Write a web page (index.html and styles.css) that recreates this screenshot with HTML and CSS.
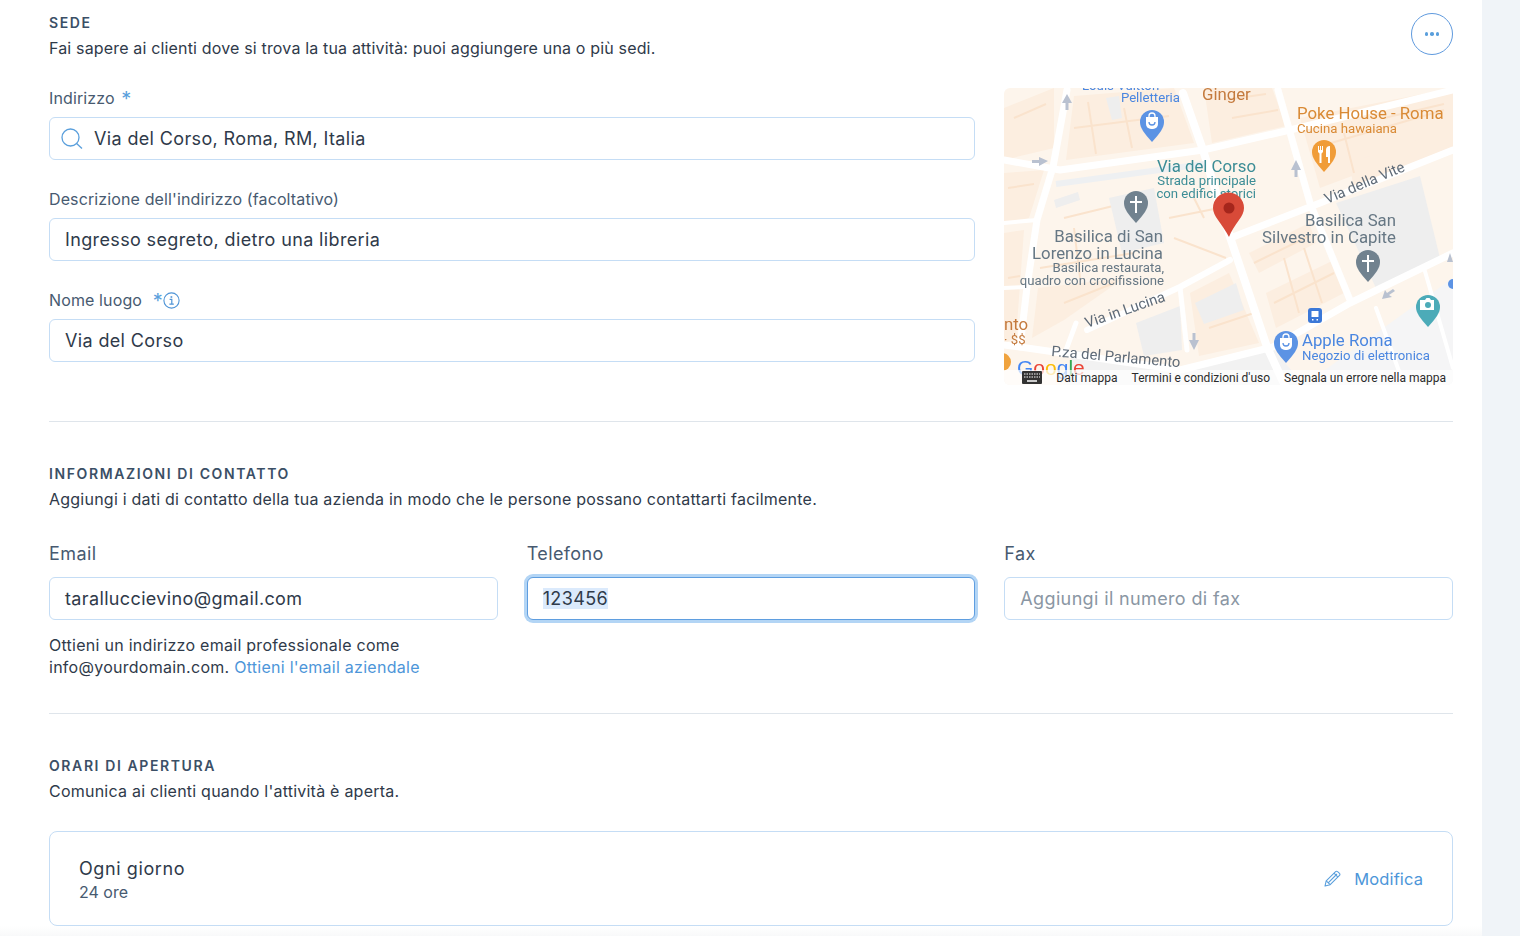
FILE: index.html
```html
<!DOCTYPE html>
<html lang="it">
<head>
    <meta charset="UTF-8">
    <title>Informazioni attività</title>
    <link rel="stylesheet" href="styles.css">
</head>
<body>
    <main class="panel">
        <section class="section section-location">
            <div class="section-head">
                <div>
                    <h2>SEDE</h2>
                    <p>Fai sapere ai clienti dove si trova la tua attività: puoi aggiungere una o più sedi.</p>
                </div>
                <button class="more-btn" aria-label="Altro"><span></span><span></span><span></span></button>
            </div>

            <div class="location-row">
                <div class="location-fields">
                    <div class="field">
                        <label>Indirizzo <span class="req">*</span></label>
                        <div class="input input-search">
                            <svg width="24" height="24" viewBox="0 0 24 24" fill="none" stroke="#5a9fdc" stroke-width="1.3"><circle cx="10.5" cy="10.5" r="8.5"/><path d="M16.6 16.6l5.4 5"/></svg>
                            <span>Via del Corso, Roma, RM, Italia</span>
                        </div>
                    </div>
                    <div class="field">
                        <label>Descrizione dell'indirizzo (facoltativo)</label>
                        <div class="input">Ingresso segreto, dietro una libreria</div>
                    </div>
                    <div class="field">
                        <label>Nome luogo <span class="req req-tight">*</span>
                            <svg class="info" width="17" height="17" viewBox="0 0 17 17" fill="none" stroke="#4f94d6"><circle cx="8.5" cy="8.5" r="7.6" stroke-width="1.1"/><path d="M6.6 7.4h2.2v4.6M6.4 12.2h4.4" stroke-width="1.2"/><path d="M8.4 4.2v1.6" stroke-width="1.7"/></svg>
                        </label>
                        <div class="input">Via del Corso</div>
                    </div>
                </div>

                <div class="map">
                    <svg class="map-art" width="449" height="297" viewBox="0 0 449 297">
                        <rect width="449" height="297" fill="#fdf5ec"/>
                        <!-- isolati -->
                        <g fill="#fceee0">
                            <path d="M0 20L50 0V60L0 72Z"/>
                            <path d="M70 8L170 0L190 55L62 72Z"/>
                            <path d="M200 0H268L282 38L208 55Z"/>
                            <path d="M296 30L449 0V50L316 100Z"/>
                            <path d="M0 85L40 82L25 130L0 135Z"/>
                            <path d="M0 145L20 142L12 250L0 255Z"/>
                            <path d="M34 200L120 190L60 232L28 250Z"/>
                            <path d="M345 75L449 40V60L350 100Z"/>
                            <path d="M245 165L305 135L312 155L255 185Z"/>
                            <path d="M262 205L330 172L340 205L272 240Z"/>
                            <path d="M186 205L225 185L255 255L195 268Z"/>
                        </g>
                        <!-- tratti degli edifici -->
                        <g fill="none" stroke="#fae3cd" stroke-width="2">
                            <path d="M10 30L42 16M70 40L165 28M84 14L92 66M120 20L128 60"/>
                            <path d="M220 12L262 6M228 30L274 22M310 60L440 22M340 45L350 85"/>
                            <path d="M60 130L150 108M36 180L130 165M70 140L76 190M4 100L30 96M4 190L16 188"/>
                            <path d="M165 130L215 120M170 150L222 170M190 110L200 130"/>
                            <path d="M250 175L305 148M270 215L330 185M280 170L295 225M300 160L318 215"/>
                            <path d="M205 240L250 225M380 30L440 16M60 215L110 195"/>
                        </g>
                        <!-- edifici grigi -->
                        <g fill="#eeeeee">
                            <path d="M332 115L416 88L436 170L372 200Z"/>
                            <path d="M191 215L232 195L240 222L200 236Z"/>
                            <path d="M132 235L176 218L178 262L140 268Z"/>
                            <path d="M105 110L150 100L160 155L118 165Z"/>
                            <path d="M102 10L115 8L118 30L108 32Z"/>
                            <path d="M50 112L74 104L76 112L52 120Z"/>
                        </g>
                        <path d="M300 297L449 190V297Z" fill="#f5f5f6"/>
                        <path d="M60 297L70 262L175 282L270 262L300 297Z" fill="#f2f2f2"/>
                        <!-- strade -->
                        <g fill="none" stroke="#fff" stroke-linecap="round" stroke-linejoin="round">
                            <path d="M179 5L199 62L226 149L263 259L282 300" stroke-width="8"/>
                            <path d="M0 72L56 82L199 62L286 42L449 2" stroke-width="7"/>
                            <path d="M63 2L49 79L33 132L23 199L16 259" stroke-width="7"/>
                            <path d="M229 149L316 115L449 62" stroke-width="7"/>
                            <path d="M274 2L306 115L346 212" stroke-width="7"/>
                            <path d="M83 242L176 199L226 172" stroke-width="6"/>
                            <path d="M0 257L16 259L176 282L269 259L346 215L449 165" stroke-width="7"/>
                            <path d="M176 199L183 262" stroke-width="5"/>
                            <path d="M72 235L62 262" stroke-width="5"/>
                            <path d="M0 135L33 132M0 200L23 199" stroke-width="4"/>
                            <path d="M372 220L400 297M420 180L449 280" stroke-width="4"/>
                        </g>
                        <path d="M52 96L200 76" stroke="#eef0f2" stroke-width="6" fill="none"/>
                        <!-- frecce -->
                        <g fill="#b9c1d0">
                            <path d="M63 6l-5 9h3.500v7h3v-7h3.500z"/>
                            <path d="M44 73l-9-4v3h-7v3h7v3z"/>
                            <path d="M292 72l-5 10h3.500v7h3v-7h3.500z"/>
                            <path d="M190 262l-5-10h3.500v-7h3v7h3.500z"/>
                            <path d="M378 211l3 -9 2 3 6-4 2 2-6 4 3 2z"/>
                            <path d="M446 165l-3 9h6z"/>
                        </g>
                        <!-- etichette -->
                        <g class="map-text">
                            <text x="78" y="2" class="t13 blue">Louis Vuitton</text>
                            <text x="176" y="14" text-anchor="end" class="t13 blue">Pelletteria</text>
                            <text x="198" y="12" class="t17 brown">Ginger</text>
                            <text x="293" y="31" class="t17 orange">Poke House - Roma</text>
                            <text x="293" y="45" class="t13 orange">Cucina hawaiana</text>
                            <text x="252" y="84" text-anchor="end" class="t17 teal">Via del Corso</text>
                            <text x="252" y="97" text-anchor="end" class="t13 teal">Strada principale</text>
                            <text x="252" y="110" text-anchor="end" class="t13 teal">con edifici storici</text>
                            <text x="159" y="154" text-anchor="end" class="t17 grey">Basilica di San</text>
                            <text x="159" y="171" text-anchor="end" class="t17 grey">Lorenzo in Lucina</text>
                            <text x="160" y="184" text-anchor="end" class="t13 grey">Basilica restaurata,</text>
                            <text x="160" y="197" text-anchor="end" class="t13 grey">quadro con crocifissione</text>
                            <text x="392" y="138" text-anchor="end" class="t17 grey">Basilica San</text>
                            <text x="392" y="155" text-anchor="end" class="t17 grey">Silvestro in Capite</text>
                            <text x="298" y="258" class="t17 blue">Apple Roma</text>
                            <text x="298" y="272" class="t13 blue">Negozio di elettronica</text>
                            <text x="0" y="242" class="t17 brown">nto</text>
                            <text x="0" y="256" class="t13 brown">· $$</text>
                            <text transform="translate(323 116) rotate(-23)" class="t14 road">Via della Vite</text>
                            <text transform="translate(83 240) rotate(-19)" class="t14 road">Via in Lucina</text>
                            <text transform="translate(47 268) rotate(5)" class="t14 road">P.za del Parlamento</text>
                        </g>
                        <!-- segnaposto -->
                        <g transform="translate(0 -8)">
                            <path d="M148 62c-8 -9 -12 -14 -12 -20a12 12 0 0 1 24 0c0 6 -4 11 -12 20z" fill="#5c93e4"/>
                            <path d="M142 37h12v7a5 5 0 0 1-5 5h-2a5 5 0 0 1-5-5z" fill="#fff"/>
                            <path d="M145 37v-1a3 3 0 0 1 6 0v1" fill="none" stroke="#fff" stroke-width="1.300"/>
                            <path d="M145 42a3 3 0 0 0 6 0" fill="none" stroke="#5c93e4" stroke-width="1.300"/>
                        </g>
                        <path d="M320 84c-8 -9 -12 -14 -12 -20a12 12 0 0 1 24 0c0 6 -4 11 -12 20z" fill="#f09c38"/>
                        <path d="M314 58h1v4h1v-4h1v4h1v-4h1v6l-1.500 1.500V75h-2V65.500L314 64zM326 58v17h-2v-6h-2v-7a4 4 0 0 1 4-4z" fill="#fff"/>
                        <path d="M132 135c-8 -9 -12 -14 -12 -20a12 12 0 0 1 24 0c0 6 -4 11 -12 20z" fill="#71828f"/>
                        <path d="M131 108h2v5h5v2h-5v10h-2v-10h-5v-2h5z" fill="#fff"/>
                        <path d="M364 194c-8 -9 -12 -14 -12 -20a12 12 0 0 1 24 0c0 6 -4 11 -12 20z" fill="#71828f"/>
                        <path d="M363 167h2v5h5v2h-5v10h-2v-10h-5v-2h5z" fill="#fff"/>
                        <path d="M424 239c-8 -9 -12 -14 -12 -20a12 12 0 0 1 24 0c0 6 -4 11 -12 20z" fill="#4cabb8"/>
                        <path d="M416 212h5l1.500-2h3l1.500 2h3v10h-14z" fill="#fff"/>
                        <circle cx="424" cy="217" r="3" fill="#4cabb8"/>
                        <path d="M282 275c-8 -9 -12 -14 -12 -20a12 12 0 0 1 24 0c0 6 -4 11 -12 20z" fill="#5c93e4"/>
                        <path d="M276 250h12v7a5 5 0 0 1-5 5h-2a5 5 0 0 1-5-5z" fill="#fff"/>
                        <path d="M279 250v-1a3 3 0 0 1 6 0v1" fill="none" stroke="#fff" stroke-width="1.300"/>
                        <path d="M279 255a3 3 0 0 0 6 0" fill="none" stroke="#5c93e4" stroke-width="1.300"/>
                        <circle cx="449" cy="196" r="5" fill="#5c93e4"/>
                        <circle cx="-2" cy="274" r="9" fill="#f0a33e"/>
                        <rect x="304" y="220" width="14" height="15" rx="3" fill="#3b78d8"/>
                        <path d="M307.500 223h7v6h-7zM308 231h1.500v1.500H308zM312.500 231H314v1.500h-1.500z" fill="#fff"/>
                        <!-- pin rosso -->
                        <path d="M225 149c-3 -6 -7 -11 -11 -17c-3 -4 -5 -8 -5 -12a15.500 15.500 0 0 1 31 0c0 4 -2 8 -5 12c-4 6 -8 11 -10 17z" fill="#d84a38"/>
                        <circle cx="225" cy="120" r="5.500" fill="#a5261c"/>
                        <!-- logo google -->
                        <text x="13" y="287" class="g-logo"><tspan fill="#4285f4">G</tspan><tspan fill="#ea4335">o</tspan><tspan fill="#fbbc05">o</tspan><tspan fill="#4285f4">g</tspan><tspan fill="#34a853">l</tspan><tspan fill="#ea4335">e</tspan></text>
                    </svg>
                    <div class="map-footer">
                        <svg class="kbd" width="20" height="13" viewBox="0 0 20 13"><rect width="20" height="13" rx="1" fill="#333"/><path d="M2 3h16M2 6h16" stroke="#fff" stroke-dasharray="1.500 1" fill="none"/><path d="M5 10h10" stroke="#fff" stroke-width="1.500"/></svg>
                        <span>Dati mappa</span>
                        <span>Termini e condizioni d'uso</span>
                        <span>Segnala un errore nella mappa</span>
                    </div>
                </div>
            </div>
        </section>

        <section class="section section-contact">
            <h2>INFORMAZIONI DI CONTATTO</h2>
            <p>Aggiungi i dati di contatto della tua azienda in modo che le persone possano contattarti facilmente.</p>
            <div class="contact-grid">
                <div class="field-lg">
                    <label>Email</label>
                    <div class="input">taralluccievino@gmail.com</div>
                    <p class="hint">Ottieni un indirizzo email professionale come info@yourdomain.com. <a href="#">Ottieni l'email aziendale</a></p>
                </div>
                <div class="field-lg">
                    <label>Telefono</label>
                    <div class="input input-focus"><mark>123456</mark></div>
                </div>
                <div class="field-lg">
                    <label>Fax</label>
                    <div class="input input-empty">Aggiungi il numero di fax</div>
                </div>
            </div>
        </section>

        <section class="section section-hours">
            <h2>ORARI DI APERTURA</h2>
            <p>Comunica ai clienti quando l'attività è aperta.</p>
            <div class="hours-card">
                <div class="hours-text">
                    <div class="hours-title">Ogni giorno</div>
                    <div class="hours-sub">24 ore</div>
                </div>
                <a class="edit-link" href="#">
                    <svg width="17" height="17" viewBox="0 0 17 17" fill="none" stroke="#5a9fdc" stroke-width="1.100" stroke-linejoin="round"><path d="M1 16l1.200-5.200L11.600 1.600a1.400 1.400 0 0 1 2 0l1.900 1.800a1.400 1.400 0 0 1 0 2L6.200 14.700z"/><path d="M2.200 10.800l4 3.900M4.200 12.800L13 4M10 3.200l3.900 3.900"/></svg>
                    Modifica
                </a>
            </div>
        </section>
    </main>
    <aside class="side"></aside>
</body>
</html>
```

FILE: styles.css
```css
html, body {
    margin: 0;
    height: 936px;
    overflow: hidden;
}

body {
    display: flex;
    font-family: Inter, "Open Sans", sans-serif;
    color: #2f3a4a;
    background-color: #fff;
}

.panel {
    width: 1482px;
    padding: 0 29px 0 49px;
    box-sizing: border-box;
    background: linear-gradient(to bottom, #fff 926px, #f8f9fa 936px);
}

.side {
    flex: 1;
    background-color: #f0f4f8;
}

h2 {
    margin: 0;
    font-size: 14px;
    line-height: 18px;
    font-weight: 600;
    letter-spacing: 1.6px;
    color: #3b4f66;
}

.section p {
    margin: 5px 0 0;
    font-size: 16px;
    line-height: 22px;
    letter-spacing: 0.23px;
}

.section {
    border-bottom: 1px solid #dfe5eb;
}

.section-location {
    padding: 14px 0 36px;
}

.section-location p {
    letter-spacing: 0.165px;
}

.section-contact {
    padding: 43px 0 35px;
}

.section-hours {
    padding: 43px 0 0;
    border-bottom: none;
}

.section-head {
    display: flex;
    justify-content: space-between;
    align-items: flex-start;
}

.more-btn {
    display: flex;
    justify-content: center;
    align-items: center;
    gap: 2px;
    width: 42px;
    height: 42px;
    margin-top: -1px;
    padding: 0;
    border: 1px solid #5f9ade;
    border-radius: 50%;
    background: #fff;
}

.more-btn span {
    width: 3.500px;
    height: 3.500px;
    border-radius: 50%;
    background: #5a9fdc;
}

.location-row {
    display: flex;
    gap: 29px;
    margin-top: 29px;
}

.location-fields {
    flex: 1;
}

.field {
    margin-bottom: 29px;
}

.field:last-child {
    margin-bottom: 0;
}

label {
    display: block;
    height: 20px;
    margin-bottom: 9px;
    font-size: 16px;
    line-height: 20px;
    letter-spacing: 0.12px;
    color: #475a70;
}

.req {
    margin-left: 2px;
    font-size: 20px;
    line-height: 0;
    vertical-align: -2px;
    color: #5a9fdc;
}

.req-tight {
    margin-left: 6px;
}

.info {
    margin-left: -4px;
    vertical-align: -3px;
}

.input {
    display: flex;
    align-items: center;
    height: 43px;
    padding: 0 15px;
    box-sizing: border-box;
    border: 1px solid #c5ddf5;
    border-radius: 6px;
    background: #fff;
    font-size: 18px;
    letter-spacing: 0.36px;
    color: #2f3a4a;
}

.input-search {
    gap: 10px;
    padding-left: 10px;
}

.input-focus {
    border: 1px solid #5f9ee0;
    box-shadow: 0 0 0 3px #b3d5f5;
}

.input-focus mark {
    background: #dbeafc;
    color: inherit;
}

.input-empty {
    color: #8a96a3;
}

.map {
    position: relative;
    width: 449px;
    height: 297px;
    border-radius: 6px;
    overflow: hidden;
}

.map-art {
    display: block;
    filter: blur(0.35px);
}

.map-text text {
    font-family: Roboto, sans-serif;
}

.t13 { font-size: 13.2px; }
.t14 { font-size: 14.8px; }
.t17 { font-size: 16.8px; }
.blue { fill: #4a86e0; }
.brown { fill: #c47a3d; }
.orange { fill: #d98a35; }
.teal { fill: #3c8d96; }
.grey { fill: #667784; }
.road { fill: #5f6b78; }

.g-logo {
    font-family: "Liberation Sans", sans-serif;
    font-size: 21px;
}

.map-footer {
    position: absolute;
    left: 0;
    right: 0;
    bottom: 0;
    display: flex;
    justify-content: flex-end;
    align-items: center;
    gap: 14px;
    height: 15px;
    padding-right: 7px;
    background: rgba(255, 255, 255, 0.7);
    font-family: Roboto, sans-serif;
    font-size: 12px;
    color: #2b2b2b;
}

.contact-grid {
    display: grid;
    grid-template-columns: repeat(3, 1fr);
    gap: 29px;
    margin-top: 33px;
}

.field-lg label {
    font-size: 18px;
    height: 22px;
    line-height: 22px;
    letter-spacing: 0.4px;
    margin-bottom: 12px;
}

.section .hint {
    margin: 14px 0 0;
    font-size: 16px;
    line-height: 22px;
    letter-spacing: 0.27px;
}

a {
    color: #4d96d9;
    text-decoration: none;
}

.hours-card {
    display: flex;
    justify-content: space-between;
    align-items: center;
    height: 95px;
    margin-top: 29px;
    padding: 0 29px;
    box-sizing: border-box;
    border: 1px solid #c5ddf5;
    border-radius: 8px;
    background: #fff;
}

.hours-text {
    padding-top: 2px;
}

.hours-title {
    font-size: 18px;
    line-height: 25px;
    letter-spacing: 0.6px;
}

.hours-sub {
    font-size: 16px;
    line-height: 22px;
    color: #475a70;
}

.edit-link {
    display: flex;
    align-items: center;
    gap: 13px;
    font-size: 16.500px;
    letter-spacing: 0.1px;
    line-height: 20px;
}
```
